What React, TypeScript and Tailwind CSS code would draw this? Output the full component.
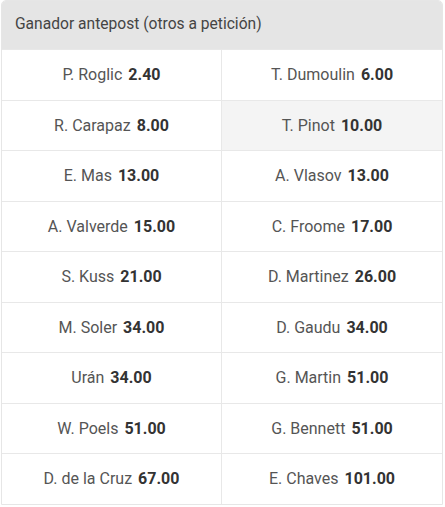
import React from 'react';

type Runner = { name: string; odds: string };

const ROWS: [Runner, Runner][] = [
  [{ name: 'P. Roglic', odds: '2.40' }, { name: 'T. Dumoulin', odds: '6.00' }],
  [{ name: 'R. Carapaz', odds: '8.00' }, { name: 'T. Pinot', odds: '10.00' }],
  [{ name: 'E. Mas', odds: '13.00' }, { name: 'A. Vlasov', odds: '13.00' }],
  [{ name: 'A. Valverde', odds: '15.00' }, { name: 'C. Froome', odds: '17.00' }],
  [{ name: 'S. Kuss', odds: '21.00' }, { name: 'D. Martinez', odds: '26.00' }],
  [{ name: 'M. Soler', odds: '34.00' }, { name: 'D. Gaudu', odds: '34.00' }],
  [{ name: 'Urán', odds: '34.00' }, { name: 'G. Martin', odds: '51.00' }],
  [{ name: 'W. Poels', odds: '51.00' }, { name: 'G. Bennett', odds: '51.00' }],
  [{ name: 'D. de la Cruz', odds: '67.00' }, { name: 'E. Chaves', odds: '101.00' }],
];

const Cell = ({ runner, highlight, right }: { runner: Runner; highlight?: boolean; right?: boolean }) => (
  <button
    className={`flex items-center justify-center gap-[6px] h-full pt-[1px] text-[16px] text-[#555] ${
      right ? '' : 'border-r border-[#e8e8e8]'
    } ${highlight ? 'bg-[#f4f4f4]' : 'bg-white'}`}
  >
    <span>{runner.name}</span>
    <span className="font-bold text-[#333]">{runner.odds}</span>
  </button>
);

export default function App() {
  return (
    <div className="w-[445px] h-[507px] bg-white pl-[1px] pr-[2px]" style={{ fontFamily: 'Roboto, "Liberation Sans", sans-serif' }}>
      <div className="border border-[#e6e6e6] rounded-t-[5px] overflow-hidden">
        {/* Header */}
        <div className="h-[48px] bg-[#e5e5e5] flex items-center px-[13px] text-[15.6px] text-[#444]">
          Ganador antepost (otros a petición)
        </div>

        {/* Odds grid */}
        {ROWS.map(([a, b], i) => (
          <div key={i} className="grid grid-cols-2 h-[50.5px] border-t border-[#e8e8e8]">
            <Cell runner={a} />
            <Cell runner={b} right highlight={i === 1} />
          </div>
        ))}
      </div>
    </div>
  );
}
